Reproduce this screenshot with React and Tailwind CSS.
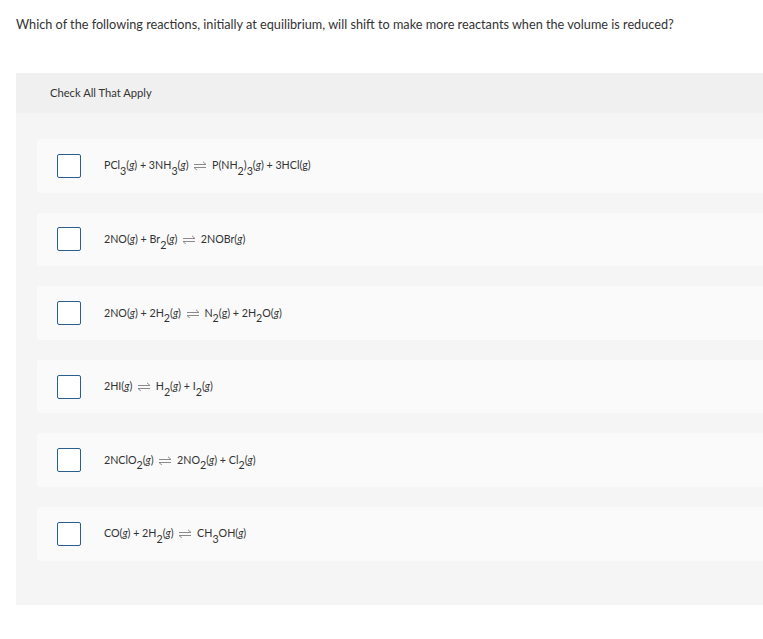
const reactions = [
  <>PCl<sub>3</sub>(<i>g</i>) + 3NH<sub>3</sub>(<i>g</i>) <Eq /> P(NH<sub>2</sub>)<sub>3</sub>(<i>g</i>) + 3HCl(g)</>,
  <>2NO(<i>g</i>) + Br<sub>2</sub>(<i>g</i>) <Eq /> 2NOBr(<i>g</i>)</>,
  <>2NO(<i>g</i>) + 2H<sub>2</sub>(<i>g</i>) <Eq /> N<sub>2</sub>(g) + 2H<sub>2</sub>O(<i>g</i>)</>,
  <>2HI(<i>g</i>) <Eq /> H<sub>2</sub>(<i>g</i>) + I<sub>2</sub>(<i>g</i>)</>,
  <>2NClO<sub>2</sub>(<i>g</i>) <Eq /> 2NO<sub>2</sub>(<i>g</i>) + Cl<sub>2</sub>(<i>g</i>)</>,
  <>CO(<i>g</i>) + 2H<sub>2</sub>(<i>g</i>) <Eq /> CH<sub>3</sub>OH(<i>g</i>)</>,
];

// equilibrium harpoons
function Eq() {
  return (
    <svg width="14" height="9" viewBox="0 0 14 9" className="mx-[2px] inline-block align-[-1px]" fill="none" stroke="#8a8a8a" strokeWidth="1">
      <path d="M1 3.5H13L10 0.8" />
      <path d="M13 6.5H1L4 9.2" />
    </svg>
  );
}

export default function App() {
  return (
    <div className="min-h-[639px] bg-white pl-4 pt-[15px] text-[#333]" style={{ fontFamily: 'Lato, "Liberation Sans", sans-serif' }}>
      <p className="text-[12.7px] leading-[19px]">
        Which of the following reactions, initially at equilibrium, will shift to make more reactants when the volume is reduced?
      </p>

      <div className="mt-[39px] bg-[#f5f5f5]">
        <div className="flex h-[40px] items-center bg-[#f0f0f0] pl-[34px] text-[11.2px]">Check All That Apply</div>
        <div className="flex flex-col gap-5 pb-[44px] pl-[21px] pt-[26px]">
          {reactions.map((r, i) => (
            <label key={i} className="flex h-[53.6px] items-center rounded-l-[3px] bg-[#fafafa] pl-[20px]">
              <span className="h-6 w-6 shrink-0 rounded-[2px] border-[1.5px] border-[#2b5d8f] bg-white" />
              <span className="ml-[23px] text-[10.7px] [&_sub]:text-[10.7px] [&_sub]:align-[-3px] [&_sub]:leading-none">{r}</span>
            </label>
          ))}
        </div>
      </div>
    </div>
  );
}
